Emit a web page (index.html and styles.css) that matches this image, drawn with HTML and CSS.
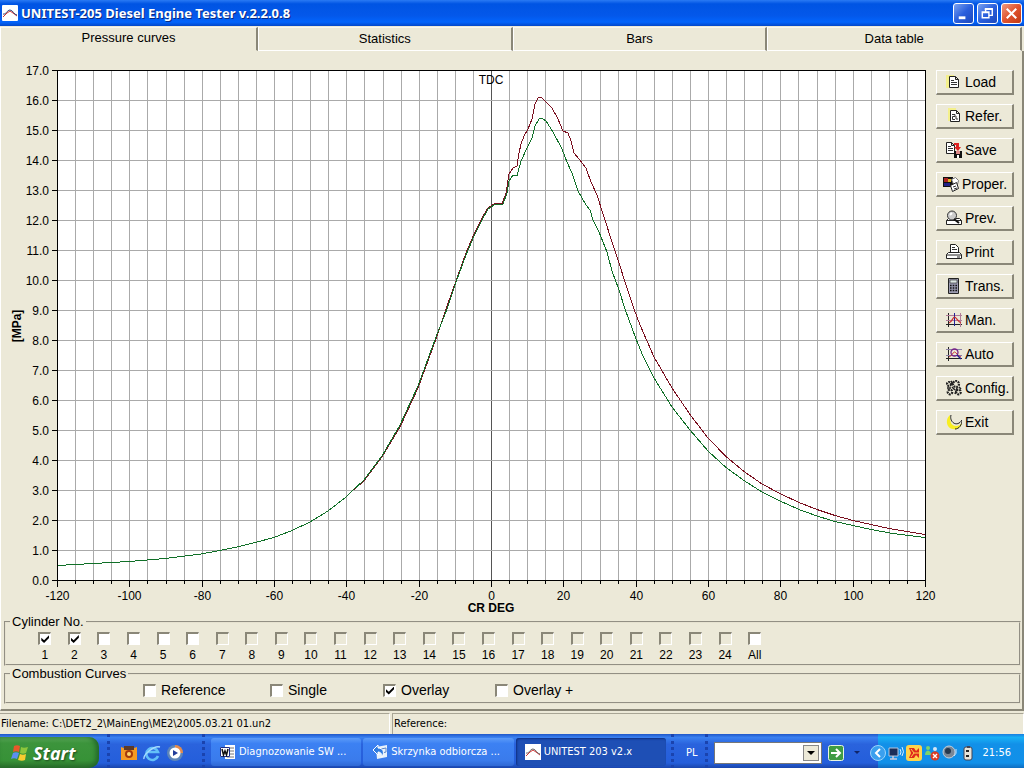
FILE: index.html
```html
<!DOCTYPE html>
<html lang="en">
<head>
  <meta charset="UTF-8">
  <title>UNITEST-205 Diesel Engine Tester</title>
  <link rel="stylesheet" href="styles.css">
</head>
<body>

  <header class="titlebar">
    <svg class="app-icon" viewBox="0 0 16 16"><rect width="16" height="16" rx="1" fill="#fff"/><path d="M1 12l4-4 3-2 3 2 4 3" fill="none" stroke="#c33"/><path d="M1 9c3 1 4-4 7-4s4 5 7 5" fill="none" stroke="#347"/></svg>
    <h1>UNITEST-205 Diesel Engine Tester v.2.2.0.8</h1>
    <button class="win-btn" aria-label="Minimize"><svg viewBox="0 0 20 20"><path d="M5 13h7v3H5z" fill="#fff"/></svg></button>
    <button class="win-btn" aria-label="Restore"><svg viewBox="0 0 20 20"><path d="M8 8V5h7v7h-3M7 5.5h8M4.500 8.500h7v6h-7zM4 9h8" fill="none" stroke="#fff" stroke-width="1.500"/></svg></button>
    <button class="win-btn close" aria-label="Close"><svg viewBox="0 0 20 20"><path d="M5 5l10 10M15 5L5 15" stroke="#fff" stroke-width="2.200"/></svg></button>
  </header>

  <nav class="tabs">
    <button class="tab active">Pressure curves</button>
    <button class="tab">Statistics</button>
    <button class="tab">Bars</button>
    <button class="tab">Data table</button>
  </nav>

  <main class="panel">
    <div class="work">
      <svg class="chart" id="chart" viewBox="8 60 924 554">
        <rect x="57" y="70" width="868" height="510" fill="#fff"/>
        <g id="grid"></g>
        <g id="curves"></g>
        <rect class="frame" x="57.5" y="70.5" width="868" height="510"/>
        <g id="axes"></g>
        <text x="491" y="84" class="tick">TDC</text>
        <text x="491" y="612" class="axis-title">CR DEG</text>
        <text transform="translate(21 326) rotate(-90)" class="axis-title">[MPa]</text>
      </svg>

      <div class="tools">
        <button class="tool"><svg viewBox="0 0 16 16"><path d="M0 1h8v3H3v10H0z" fill="#f4f08c"/><path d="M3.500 2.500h6l3 3v8h-9zM9.500 2.500v3h3" class="ic"/><path d="M5 6.500h3M5 8.500h6M5 10.500h6" class="ln"/></svg>Load</button>
        <button class="tool"><svg viewBox="0 0 16 16"><path d="M2 0h8v3H5v10H2z" fill="#f4f08c"/><path d="M4.500 2.500h6l3 3v8h-9zM10.500 2.500v3h3" class="ic"/><path d="M6 6.500h3v2H6.500v3H9M10 8v3h2" class="ln"/></svg>Refer.</button>
        <button class="tool"><svg viewBox="0 0 16 16"><path d="M.5.500h5l3 3v8h-8zM5.500.500v3h3" class="ic"/><path d="M2 4.500h3M2 6.500h5M2 8.500h5" class="ln"/><path d="M8 1h5v4h2l-3 4-4-4h2V3H8z" fill="#d22"/><path d="M8 9h8v7H8z" fill="#111"/><path d="M10 9h4v3h-4z" fill="#d88"/><path d="M11 13h2v3h-2z" fill="#fff"/></svg>Save</button>
        <button class="tool wide"><svg viewBox="0 0 16 16"><path d="M0 1h10v10H0z" fill="#111"/><path d="M1 2h4v4H1z" fill="#a22"/><path d="M5 3h3v3H5z" fill="#ddb321"/><path d="M1 7h6v3H1z" fill="#228"/><path d="M8.500 3.500l4-2 3 3-1 4-3 2z" fill="#fff" stroke="#777"/><path d="M7.500 9.500l6-3 2 6-6 3z" fill="#fff" stroke="#222"/><path d="M10 11l3-1M11 13l3-1" class="ln"/></svg>Proper.</button>
        <button class="tool"><svg viewBox="0 0 16 16"><path d="M.5 10.500l2-2h11l2 2v4H.5zM.5 10.500h15" class="ic"/><circle cx="6" cy="5.500" r="4.500" fill="#ccc" stroke="#333"/><path d="M4 5l2-2" stroke="#fff" stroke-width="2"/><path d="M8 9l5 4" stroke="#111" stroke-width="2"/></svg>Prev.</button>
        <button class="tool"><svg viewBox="0 0 16 16"><path d="M4.500 8.500v-8h5l3 3v5" class="ic"/><path d="M6 3.500h3M6 5.500h5" class="ln"/><path d="M.5 10.500l2-2h11l2 2v4H.5zM.5 11h15M11 13h3" class="ic"/></svg>Print</button>
        <button class="tool"><svg viewBox="0 0 16 16"><path d="M2.500.500h10v15h-10z" fill="#9a9ab0" stroke="#222"/><path d="M4 2h7v3H4z" fill="#dde8e4" stroke="#222" stroke-width=".6"/><path d="M4 7.500h7M4 10h7M4 12.500h7" stroke="#111" stroke-width="1.600" stroke-dasharray="1.600 1.100"/></svg>Trans.</button>
        <button class="tool"><svg viewBox="0 0 16 16"><path d="M2.500 1v14M0 12.500h16" stroke="#222"/><path d="M0 3.500h16M0 8.500h16M14.500 1v14" stroke="#b07c98"/><path d="M8.500 1v13" stroke="#229"/><path d="M3 11c3-1 4-6 5.500-6S12 10 15 11" fill="none" stroke="#c33" stroke-width="1.200"/></svg>Man.</button>
        <button class="tool"><svg viewBox="0 0 16 16"><path d="M2.500 1v14M0 12.500h16" stroke="#222"/><path d="M0 3.500h16M0 9.500h16" stroke="#8a80a6"/><path d="M3 11c3-1 4-5 5.500-5S12 10 15 11" fill="none" stroke="#c33"/><circle cx="8.500" cy="6.500" r="3.500" fill="none" stroke="#728" stroke-width="1.300"/><path d="M11 9l4 4" stroke="#229" stroke-width="1.500"/></svg>Auto</button>
        <button class="tool"><svg viewBox="0 0 16 16"><g fill="none" stroke="#222" stroke-width="2.200" stroke-dasharray="1.800 .8"><circle cx="3" cy="4" r="2"/><circle cx="10" cy="4" r="3"/><circle cx="4" cy="12" r="2.300"/><circle cx="12.500" cy="12" r="2.300"/></g><path d="M6 7l3 3M1 8h4M9 14l2-6M5 1l2 3M13 7l2 2" stroke="#222" stroke-width="1.500"/></svg>Config.</button>
        <button class="tool"><svg viewBox="0 0 16 16"><path d="M4 1C-1 5 0 14 7 15c4 1 8-1 9-6-3 4-9 4-11 0-1-3-1-5-1-8z" fill="#f8ee22"/><path d="M5 1c-2 7 6 13 11 5 0 5-3 9-7 9" fill="none" stroke="#222"/></svg>Exit</button>
      </div>
    </div>

    <fieldset class="group">
      <legend>Cylinder No.</legend>
      <div class="cylinders" id="cylinders"></div>
    </fieldset>

    <fieldset class="group">
      <legend>Combustion Curves</legend>
      <div class="modes">
        <label><input type="checkbox">Reference</label>
        <label><input type="checkbox">Single</label>
        <label><input type="checkbox" checked>Overlay</label>
        <label><input type="checkbox">Overlay +</label>
      </div>
    </fieldset>
  </main>

  <div class="status">
    <span>Filename: C:\DET2_2\MainEng\ME2\2005.03.21 01.un2</span>
    <span>Reference:</span>
  </div>

  <footer class="taskbar">
    <button class="start">
      <svg viewBox="0 0 18 18"><path d="M3 2c2-1 4-1 6 0L8 8C6 7 4 7 2 8z" fill="#e8582a"/><path d="M10 3c2 1 4 1 7 0l-2 6c-2 1-4 1-6 0z" fill="#8cc63c"/><path d="M2 9c2-1 4-1 6 0l-2 6c-2-1-4-1-6 0z" fill="#5b8ff0"/><path d="M9 10c2 1 4 1 6 0l-1 6c-2 1-4 1-7 0z" fill="#f8cc30"/></svg>
      Start
    </button>
    <div class="quick">
      <svg viewBox="0 0 18 18"><path d="M1 3l3 1 2-2 3 2 3-2 2 2 3-1v13H1z" fill="#f59a23"/><path d="M4 2h10v4H4z" fill="#5b3a2a"/><circle cx="9" cy="10" r="4" fill="#a63a0c"/><circle cx="9" cy="10" r="2" fill="#ffd56b"/></svg>
      <svg viewBox="0 0 18 18"><path d="M15 12a6 6 0 1 1 0-4H5" fill="none" stroke="#63c0f8" stroke-width="2.600"/><path d="M1 15C0 11 11 1 17 3" fill="none" stroke="#a6dcff" stroke-width="1.400"/></svg>
      <svg viewBox="0 0 18 18"><circle cx="9" cy="9" r="8" fill="#5e86b8"/><path d="M9 1a8 8 0 0 1 8 8H9z" fill="#e88b4a"/><circle cx="9" cy="9" r="5.500" fill="#fff"/><path d="M7 6l5 3-5 3z" fill="#223c9a"/></svg>
    </div>
    <div class="tasks">
      <button class="task"><svg viewBox="0 0 16 16"><path d="M5 1h10v14H5z" fill="#fff"/><path d="M7 4h7M7 7h7M7 10h7M7 13h7" stroke="#777"/><path d="M0 3h10v10H0z" fill="#fff"/><path d="M.5 3.500h9v9h-9z" fill="#fff" stroke="#1c2f88"/><path d="M2 5l1.500 6L5 7l1.500 4L8 5" fill="none" stroke="#111" stroke-width="1.500"/></svg>Diagnozowanie SW ...</button>
      <button class="task"><svg viewBox="0 0 16 16"><path d="M4 3l11-2v12l-10 2z" fill="#e8f1fb"/><path d="M9 5l5-1v4l-4 1" fill="none" stroke="#5c86c8"/><path d="M1 6l5-5v3c5 0 7 4 4 9 0-4-2-5-4-5v3z" fill="#2f7be0" stroke="#fff"/></svg>Skrzynka odbiorcza ...</button>
      <button class="task current"><svg viewBox="0 0 16 16"><rect width="16" height="16" fill="#fff"/><path d="M1 12l4-4 3-2 3 2 4 3" fill="none" stroke="#c33"/><path d="M1 9c3 1 4-4 7-4s4 5 7 5" fill="none" stroke="#666"/></svg>UNITEST 203 v2.x</button>
    </div>
    <div class="lang">PL</div>
    <div class="address">
      <div class="combo"><select aria-label="Address"><option></option></select><i></i></div>
      <button class="go" aria-label="Go"><svg viewBox="0 0 16 16"><rect x=".5" y=".5" width="15" height="15" rx="2" fill="#3f9c44" stroke="#e8f5e0"/><path d="M3 8h9M8 4l4 4-4 4" fill="none" stroke="#fff" stroke-width="2"/></svg></button>
      <span class="more"></span>
    </div>
    <div class="tray">
      <button class="chevron" aria-label="Show hidden icons"><svg viewBox="0 0 16 16"><circle cx="8" cy="8" r="7.500" fill="#3aa0ee" stroke="#9bd4fa"/><path d="M10 4L6 8l4 4" fill="none" stroke="#fff" stroke-width="2"/></svg></button>
      <svg viewBox="0 0 16 16"><path d="M1 3h9v8H1z" fill="#1b2e58" stroke="#b5c5dd"/><path d="M2 14h7M5 11v3" stroke="#ccd" stroke-width="1.500"/><path d="M12 4q2 3 0 6M14 2q3 5 0 9" fill="none" stroke="#d8ecff"/></svg>
      <svg viewBox="0 0 16 16"><rect width="16" height="16" rx="3" fill="#ffd34a"/><path d="M3 3h5l2 3 3-3v10l-3-3-2 3H3l2-5z" fill="#e02a1c"/><path d="M8 8h5M8 8L5 4M8 8l-3 4" stroke="#ffd34a"/></svg>
      <svg viewBox="0 0 16 16"><circle cx="4" cy="3" r="2" fill="#7cd36a"/><path d="M1 10c0-6 6-6 6 0z" fill="#7cd36a"/><circle cx="11" cy="4" r="2" fill="#d5e6f5"/><path d="M8 10c0-5 6-5 6 0z" fill="#4d7d94"/><circle cx="11" cy="11" r="4.500" fill="#dc3b22"/><path d="M9 9l4 4M13 9l-4 4" stroke="#fff" stroke-width="1.400"/></svg>
      <svg viewBox="0 0 16 16"><circle cx="7" cy="7" r="6" fill="#7a8796" stroke="#c6ced8"/><circle cx="6" cy="6" r="3" fill="#26384e"/><path d="M12 11q3-2 2-7" fill="none" stroke="#cfe6fa"/></svg>
      <svg viewBox="0 0 16 16"><rect x="4" y="2" width="8" height="13" rx="2" fill="#e6e4da" stroke="#445"/><path d="M7 1h3v2H7z" fill="#445"/><path d="M6 6h3M6 11h3" stroke="#222" stroke-width="2"/></svg>
      <time>21:56</time>
    </div>
  </footer>

  <script src="script.js"></script>
</body>
</html>
```
FILE: styles.css
```css
* { box-sizing: border-box; }
body {
  margin: 0; min-height: 100vh;
  display: flex; flex-direction: column;
  background-color: #ece9d8; color: #000;
  font: 14px/16px "Liberation Sans", Arial, sans-serif;
}
button { font: inherit; color: inherit; border: none; padding: 0; margin: 0; }
svg { display: block; }

/* title bar */
.titlebar {
  display: flex; align-items: center; gap: 3px;
  height: 26px; padding: 0 2px;
  background: linear-gradient(#2a7af4, #0054e3 15%, #0458ea 60%, #0264fc 85%, #0347c8);
  color: #fff;
}
.titlebar h1 {
  flex: 1; margin: 0;
  font: bold 13px/20px "Noto Sans", sans-serif;
  text-shadow: 1px 1px #0a2a80;
}
.app-icon { width: 16px; height: 16px; }
.win-btn {
  width: 21px; height: 21px;
  border: 1px solid #fff; border-radius: 3px;
  background: linear-gradient(135deg, #7ba2f0, #2a5fdd 50%, #1c48bc);
}
.win-btn.close { background: linear-gradient(135deg, #ee9a80, #e0532e 50%, #c03a14); }

/* tabs */
.tabs { display: grid; grid-template-columns: 258px repeat(3, 1fr); padding-right: 2px; }
.tab {
  height: 24px; margin-top: 1px;
  background: none;
  font-size: 13px;
  border-left: 1px solid #fff; border-right: 2px solid #8a8778;
  border-top: 1px solid #f8f7f0; border-bottom: 1px solid #fff;
}
.tab.active { padding-bottom: 3px; border-bottom-color: transparent; }

/* main panel */
.panel {
  flex: 1; padding: 9px 0 4px;
  border-left: 1px solid #fff; border-right: 2px solid #8a8778;
  border-bottom: 2px solid #8a8778;
}
.work { display: flex; gap: 4px; padding: 0 8px 0 7px; }
.chart { flex: 1; min-width: 0; overflow: visible; }
.line { stroke: #aaa; shape-rendering: crispEdges; }
.line.zero { stroke: #555; }
.axis { stroke: #000; shape-rendering: crispEdges; }
.frame { fill: none; stroke: #000; shape-rendering: crispEdges; }
.curve { fill: none; stroke-width: 1; shape-rendering: crispEdges; }
.curve.red { stroke: #7a1020; }
.curve.green { stroke: #107028; }
.tick { font-size: 12px; text-anchor: middle; }
.tick.y { text-anchor: end; }
.axis-title { font-size: 12px; font-weight: bold; text-anchor: middle; }

.tools { display: flex; flex-direction: column; gap: 9px; width: 78px; padding-top: 10px; }
.tool {
  display: flex; align-items: center; gap: 3px;
  height: 25px; padding-left: 9px;
  background-color: #ece9d8;
  border: 1px solid #fff;
  border-right: 2px solid #8a8778; border-bottom: 2px solid #8a8778;
}
.tool.wide { padding-left: 6px; }
.tool svg { flex: none; width: 16px; height: 16px; }
.ic { fill: #fff; stroke: #222; }
.ln { fill: none; stroke: #333; }

/* check box groups */
.group { margin: 0 1px 0 3px; padding: 0; border: 2px groove #e6e2d0; min-width: 0; }
.group legend { margin-left: 4px; padding: 0 2px; line-height: 16px; font-size: 13px; }
input[type="checkbox"] {
  appearance: none;
  display: grid; place-items: center;
  width: 13px; height: 13px; margin: 0;
  background-color: #fff;
  border: 1px solid #fff; border-top: 2px solid #8a8778; border-left: 2px solid #8a8778;
}
input[type="checkbox"]:disabled { background-color: #ece9d8; }
input[type="checkbox"]:checked::after {
  content: ""; width: 8px; height: 8px;
  background-color: #000;
  clip-path: polygon(0 35%, 35% 65%, 100% 0, 100% 35%, 35% 100%, 0 70%);
}
.cylinders {
  display: grid; grid-template-columns: repeat(25, 1fr);
  width: 73%; margin-left: 24px; padding: 2px 0 1px;
}
.cylinders label {
  display: flex; flex-direction: column; align-items: center; gap: 2px;
  font-size: 12px;
}
.modes {
  display: grid; grid-template-columns: 127px 113px 112px 112px;
  padding: 0 0 4px 137px;
}
.modes label { display: flex; align-items: center; gap: 5px; }

/* status bar */
.status {
  display: grid; grid-template-columns: 390px 1fr; gap: 2px;
  padding-top: 2px;
  font: 11px/20px "DejaVu Sans Condensed", "DejaVu Sans", sans-serif;
}
.status span { padding-left: 1px; border-top: 1px solid #a8a595; border-right: 1px solid #fff; }
.status span + span { border-left: 1px solid #a8a595; }

/* taskbar */
.taskbar {
  display: flex; align-items: stretch;
  height: 34px;
  background: linear-gradient(#1f57c8, #3a80f0 10%, #2a63dd 30%, #245edb 85%, #1a45ab);
  color: #fff;
  font: 11px/16px "DejaVu Sans Condensed", "DejaVu Sans", sans-serif;
}
.start {
  display: flex; align-items: center; gap: 4px;
  width: 99px; margin-top: 3px; padding-left: 11px;
  border-radius: 0 10px 10px 0;
  background: linear-gradient(#5eac5c, #3c943c 20%, #379237 75%, #2a6e2a);
  box-shadow: inset -3px 0 5px #22662a;
  font: italic bold 18px/24px "Open Sans", sans-serif;
  text-shadow: 1px 1px 2px #1d4a1d;
}
.start svg { width: 18px; height: 18px; }
.quick {
  display: flex; align-items: center; gap: 5px;
  margin-left: 8px; padding: 4px 18px 0 10px;
  border-left: 3px dotted #1a43ae;
}
.quick svg { width: 18px; height: 18px; }
.tasks {
  flex: 1; display: grid; grid-template-columns: repeat(3, 1fr); gap: 2px;
  padding: 4px 5px 2px 6px; border-left: 3px dotted #1a43ae;
}
.task {
  display: flex; align-items: center; gap: 3px;
  min-width: 0; padding-left: 9px; white-space: nowrap;
  border-radius: 3px;
  background: linear-gradient(#5c9bf8, #3c81f3 20%, #3a7bec 80%, #2f68d4);
}
.task svg { width: 16px; height: 16px; }
.task.current { background: #1e4fb5; box-shadow: inset 1px 1px 2px #0f2f80; }
.lang {
  display: flex; align-items: center;
  padding: 4px 8px 0 12px;
  border-left: 3px dotted #1a43ae; border-right: 3px dotted #1a43ae;
}
.address { display: flex; align-items: center; gap: 6px; padding: 3px 18px 0 6px; }
.combo {
  display: flex; width: 108px; height: 22px; padding: 2px;
  background-color: #fff; border: 1px solid #777;
}
.combo select { flex: 1; min-width: 0; appearance: none; border: none; background: none; }
.combo i {
  display: grid; place-items: center; width: 16px;
  background-color: #ece9d8; border: 1px solid #888;
}
.combo i::after, .more {
  content: ""; border: 4px solid transparent; border-top-color: #000; border-bottom: none;
}
.more { margin-left: 4px; border-width: 3px; border-top-color: #10256a; }
.go { width: 16px; height: 16px; background: none; }
.tray {
  display: flex; align-items: center; gap: 2px;
  padding: 3px 13px 0 0;
  background: linear-gradient(#1a7ee0, #18b0f5 10%, #1290e8 30%, #1190e9 85%, #0f6dc0);
}
.tray svg { width: 16px; height: 16px; }
.tray time { margin-left: 4px; }
.chevron { margin-left: -8px; background: none; }
```
FILE: script.js
```js
const SVG = "http://www.w3.org/2000/svg";
const px = deg => Math.round(57 + (deg + 120) * 868 / 240) + 0.5;
const py = mpa => 580 - mpa * 30 + 0.5;

function add(parent, tag, attrs, text) {
  const el = document.createElementNS(SVG, tag);
  for (const key in attrs) el.setAttribute(key, attrs[key]);
  if (text !== undefined) el.textContent = text;
  document.getElementById(parent).appendChild(el);
}

function line(parent, cls, x1, y1, x2, y2) {
  add(parent, "line", { class: cls, x1, y1, x2, y2 });
}

for (let deg = -120; deg <= 120; deg += 5) {
  const x = px(deg);
  const major = deg % 20 === 0;
  line("grid", deg === 0 ? "line zero" : "line", x, 70, x, 580);
  line("axes", "axis", x, 580, x, major ? 587 : 584);
  if (major) add("axes", "text", { class: "tick", x: x, y: 600 }, deg);
}
for (let mpa = 0; mpa <= 17; mpa++) {
  const y = py(mpa);
  line("grid", "line", 57, y, 925, y);
  line("axes", "axis", 52, y, 57, y);
  add("axes", "text", { class: "tick y", x: 49, y: y + 4 }, mpa.toFixed(1));
}

// compression side is nearly the same for both cylinders
const rise = "57,565.5 93,563.5 129,561.5 165,558.5 201,554 220,550.5 237,547 255,542.5 274,537.5 292,530.5 310,522 328,511 346,497 352,491 ";
const red = rise + "364,481 382,457 400,427 418,388 436,339 446,309 456,281 466,253 474,234 482,218 488,208 495,203.5 502,204 506,193 509,174 513,168 517,166 519,153 521,144 524,136 528,129 532,119 535,104 538,98 541,97 545,101 552,108 558,119 563,131 568,133 571,141 574,153 579,159 586,168 591,182 597,195 604,217 612,242 619,263 626,285 634,309 640,325 654,357 672,388 690,414.5 708,438 726,456.5 744,471.5 762,484 780,493.5 799,502.5 817,509.5 835,515.5 853,520.5 871,524.5 889,528.5 907,531.5 925,534.5";
const green = rise + "364,480 382,456 400,425 418,386 436,337 447,309 456,282 466,255 474,236 482,220 488,209 495,204.5 503,204 507,193 509,181 513,175 517,176 521,161 528,146 532,138 535,126 539,119 542,118 546,121 553,132 562,149 567,162 572,173 578,191 586,205 590,210 593,220 599,232 607,252 612,271 619,290 625,309 636,339 643,356 654,378 672,407 690,430 708,451 726,467.5 744,480.5 762,492 780,501 799,509.5 817,516 835,521.5 853,525.5 871,529.5 893,533.5 925,537.5";
add("curves", "polyline", { class: "curve red", points: red });
add("curves", "polyline", { class: "curve green", points: green });

const cylinders = document.getElementById("cylinders");
for (let i = 1; i <= 25; i++) {
  const label = document.createElement("label");
  const box = document.createElement("input");
  box.type = "checkbox";
  box.checked = i <= 2;
  box.disabled = i > 6 && i < 25;
  label.append(box, i === 25 ? "All" : i);
  cylinders.appendChild(label);
}
```
